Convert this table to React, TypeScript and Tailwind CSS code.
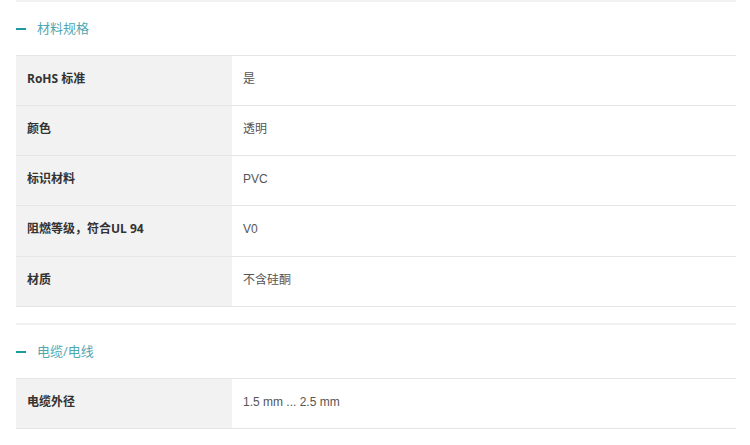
const sections = [
  {
    title: "材料规格",
    rows: [
      ["RoHS 标准", "是"],
      ["颜色", "透明"],
      ["标识材料", "PVC"],
      ["阻燃等级，符合UL 94", "V0"],
      ["材质", "不含硅酮"],
    ],
  },
  {
    title: "电缆/电线",
    rows: [["电缆外径", "1.5 mm ... 2.5 mm"]],
  },
];

export default function App() {
  return (
    <div className="w-[750px] h-[445px] overflow-hidden bg-white pl-4 pr-[14px] font-['Open_Sans','Noto_Sans_CJK_SC',sans-serif]">
      {sections.map((s) => (
        <section key={s.title} className="border-t-2 border-[#f2f2f2] mb-4">
          {/* Heading */}
          <div className="h-[53px] flex items-center">
            <span className="block w-[10px] h-[2px] bg-[#1e9aa0]" />
            <span className="ml-[11px] text-[13px] text-[#4fa7b1] leading-none">{s.title}</span>
          </div>

          {/* Table */}
          <div className="border-b border-[#e6e6e6]">
            {s.rows.map(([label, value], i) => (
              <div
                key={label}
                className={`flex border-t border-[#e6e6e6] ${i === 3 ? "h-[51px]" : "h-[50px]"}`}
              >
                <div className="w-[216px] bg-[#f2f2f2] pl-[11px] pb-[4px] flex items-center text-[12px] font-bold text-[#333]">
                  {label}
                </div>
                <div className="flex-1 pl-[11px] pb-[4px] flex items-center text-[12px] text-[#555] font-['Liberation_Sans','Noto_Sans_CJK_SC',sans-serif]">
                  {value}
                </div>
              </div>
            ))}
          </div>
        </section>
      ))}
    </div>
  );
}
